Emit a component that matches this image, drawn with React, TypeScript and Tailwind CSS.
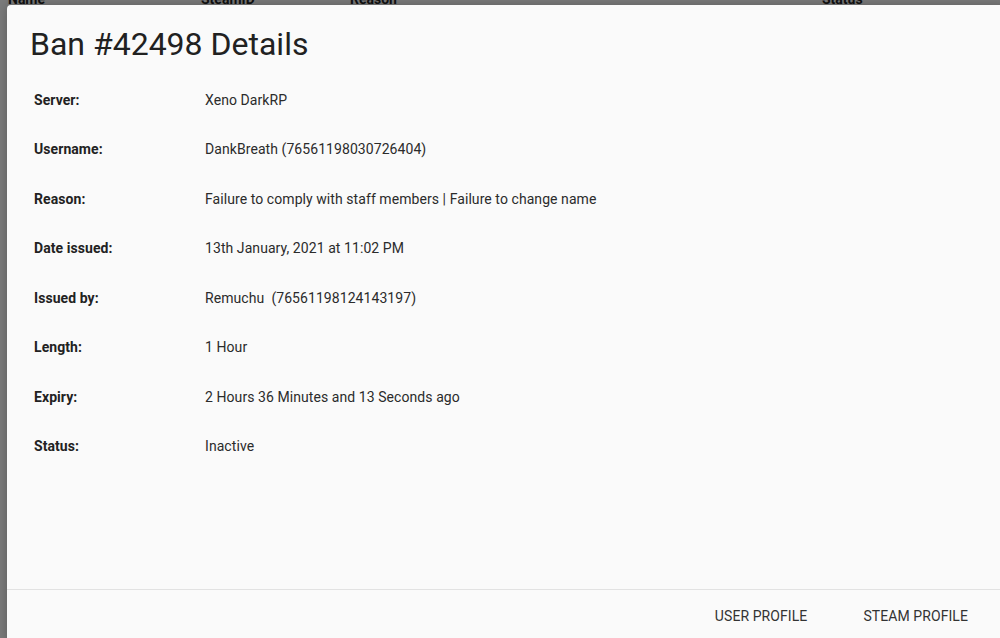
import React from "react";

const rows: [string, string][] = [
  ["Server:", "Xeno DarkRP"],
  ["Username:", "DankBreath (76561198030726404)"],
  ["Reason:", "Failure to comply with staff members | Failure to change name"],
  ["Date issued:", "13th January, 2021 at 11:02 PM"],
  ["Issued by:", "Remuchu\u00a0 (76561198124143197)"],
  ["Length:", "1 Hour"],
  ["Expiry:", "2 Hours 36 Minutes and 13 Seconds ago"],
  ["Status:", "Inactive"],
];

export default function App() {
  return (
    <div
      className="relative h-[638px] w-[1000px] overflow-hidden bg-[#7b7b7b]"
      style={{ fontFamily: "Roboto, 'Noto Sans', sans-serif" }}
    >
      {/* background table header, covered by dialog */}
      <div className="absolute left-0 top-[-11px] flex h-[20px] w-full items-center text-[14px] font-bold text-[#111]">
        <span className="absolute left-[8px]">Name</span>
        <span className="absolute left-[201px]">SteamID</span>
        <span className="absolute left-[350px]">Reason</span>
        <span className="absolute left-[822px]">Status</span>
      </div>

      {/* dialog */}
      <div className="absolute left-[7px] top-[5px] flex h-[638px] w-[1000px] flex-col rounded-tl-[4px] bg-[#fafafa] shadow-[0_0_12px_rgba(0,0,0,0.25)]">
        <div className="pl-[23px] pt-[20px]">
          <h1 className="text-[32px] leading-[38px] font-normal text-[#212121]">
            Ban #42498 Details
          </h1>
        </div>
        <div className="mt-[12px] pl-[27px]">
          {rows.map(([label, value]) => (
            <div key={label} className="flex h-[49.5px] items-center text-[14px] leading-[20px] tracking-[0.07px]">
              <div className="w-[171px] font-bold text-[#222]">{label}</div>
              <div className="text-[#2b2b2b]">{value}</div>
            </div>
          ))}
        </div>
        <div className="flex-1" />
        <div className="flex h-[54px] items-center justify-end border-t border-[#e2e2e2] pr-[31px]">
          <button className="px-[8px] py-[6px] text-[14px] font-normal uppercase tracking-[0.08px] text-[#333]">
            User Profile
          </button>
          <button className="ml-[40px] px-[8px] py-[6px] text-[14px] font-normal uppercase tracking-[0.08px] text-[#333]">
            Steam Profile
          </button>
        </div>
      </div>
    </div>
  );
}
